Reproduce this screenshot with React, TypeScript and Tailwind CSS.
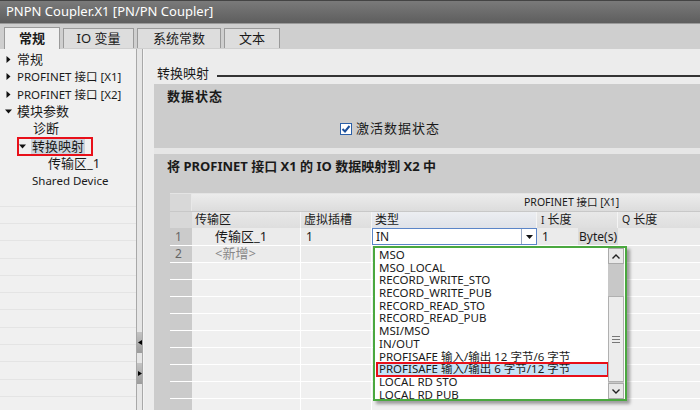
import React from 'react';

const FONT = { fontFamily: '"Noto Sans", "Noto Sans CJK SC", sans-serif' };

const TreeArrow = ({ open }: { open?: boolean }) => (
  <svg width="7" height="7" viewBox="0 0 7 7" className="shrink-0">
    {open ? <path d="M0 1.5 L7 1.5 L3.5 5.5 Z" fill="#111" /> : <path d="M1.5 0 L5.5 3.5 L1.5 7 Z" fill="#111" />}
  </svg>
);

const treeItems: { label: string; indent: number; arrow?: 'open' | 'closed'; selected?: boolean }[] = [
  { label: '常规', indent: 5, arrow: 'closed' },
  { label: 'PROFINET 接口 [X1]', indent: 5, arrow: 'closed' },
  { label: 'PROFINET 接口 [X2]', indent: 5, arrow: 'closed' },
  { label: '模块参数', indent: 5, arrow: 'open' },
  { label: '诊断', indent: 33 },
  { label: '转换映射', indent: 19, arrow: 'open', selected: true },
  { label: '传输区_1', indent: 48 },
  { label: 'Shared Device', indent: 32 },
];

const dropItems = [
  'MSO',
  'MSO_LOCAL',
  'RECORD_WRITE_STO',
  'RECORD_WRITE_PUB',
  'RECORD_READ_STO',
  'RECORD_READ_PUB',
  'MSI/MSO',
  'IN/OUT',
  'PROFISAFE 输入/输出 12 字节/6 字节',
  'PROFISAFE 输入/输出 6 字节/12 字节',
  'LOCAL RD STO',
  'LOCAL RD PUB',
];

// column widths: no, 传输区, 虚拟插槽, 类型, I 长度, Q 长度
const Row = ({ children, className = '' }: { children: React.ReactNode; className?: string }) => (
  <div className={`flex h-[17px] border-b border-white ${className}`}>{children}</div>
);

export default function App() {
  return (
    <div style={FONT} className="w-[700px] h-[410px] overflow-hidden flex flex-col bg-[#ececec] text-[12px] text-[#1a1a1a]">
      {/* title bar */}
      <div className="h-[23px] shrink-0 flex items-center pl-[6px] bg-gradient-to-b from-[#7a7a7a] to-[#5e5e5e] border-t border-[#444] text-white text-[13px]">
        PNPN Coupler.X1 [PN/PN Coupler]
      </div>
      {/* tabs */}
      <div className="h-[26px] shrink-0 flex items-end gap-[3px] pl-[4px] bg-[#cfcfcf] border-t border-[#9a9a9a]">
        <div className="h-[22px] w-[56px] flex items-center justify-center bg-[#f0f0f0] border border-b-0 border-[#9a9a9a] font-bold text-[13px]">常规</div>
        <div className="h-[20px] w-[71px] flex items-center justify-center bg-[#dddddd] border border-b-0 border-[#9a9a9a] text-[13px] mb-[1px]">IO 变量</div>
        <div className="h-[20px] w-[84px] flex items-center justify-center bg-[#dddddd] border border-b-0 border-[#9a9a9a] text-[13px] mb-[1px]">系统常数</div>
        <div className="h-[20px] w-[56px] flex items-center justify-center bg-[#dddddd] border border-b-0 border-[#9a9a9a] text-[13px] mb-[1px]">文本</div>
      </div>
      <div className="flex-1 flex min-h-0">
        {/* tree */}
        <div className="w-[136px] shrink-0 bg-[#f0f0f0] flex flex-col pt-[2px]">
          {treeItems.map((t) => (
            <div key={t.label} className="h-[17.3px] shrink-0 flex items-center" style={{ paddingLeft: t.indent }}>
              {t.arrow && (
                <span className="mr-[5px] flex">
                  <TreeArrow open={t.arrow === 'open'} />
                </span>
              )}
              {t.selected ? (
                <span className="relative bg-[#cdd4dc] text-[13px] leading-[15px] px-[1px]">
                  {t.label}
                  <span className="absolute -left-[14px] -top-[2px] w-[76px] h-[19px] border-2 border-[#e8101a]" />
                </span>
              ) : (
                <span className={t.label.startsWith('PROFINET') || t.label === 'Shared Device' ? 'text-[11.5px]' : 'text-[13px]'}>{t.label}</span>
              )}
            </div>
          ))}
          {Array.from({ length: 12 }).map((_, i) => (
            <div key={i} className="h-[17.3px] shrink-0 border-b border-[#e4e4e4]" />
          ))}
        </div>
        {/* splitter */}
        <div className="w-[8px] shrink-0 flex bg-[#e6e6e6]">
          <div className="w-[1px] bg-[#a8a8a8]" />
          <div className="w-[5px] flex flex-col items-center pt-[283px] gap-[10px]">
            <div className="w-[5px] h-[21px] bg-gradient-to-b from-[#c4c4c4] to-[#9c9c9c] flex items-center justify-center">
              <svg width="4" height="5" viewBox="0 0 4 5"><path d="M4 0 L0 2.5 L4 5 Z" fill="#000" /></svg>
            </div>
            <div className="w-[5px] h-[21px] bg-gradient-to-b from-[#c4c4c4] to-[#9c9c9c] flex items-center justify-center">
              <svg width="4" height="5" viewBox="0 0 4 5"><path d="M0 0 L4 2.5 L0 5 Z" fill="#000" /></svg>
            </div>
          </div>
          <div className="w-[1px] bg-[#a8a8a8]" />
          <div className="w-[1px] bg-[#f4f4f4]" />
        </div>
        {/* right */}
        <div className="flex-1 flex flex-col pl-[10px] bg-[#ececec] min-w-0">
          <div className="h-[35px] shrink-0 flex items-center pl-[3px] pt-[14px]">
            <span className="text-[13px] whitespace-nowrap">转换映射</span>
            <div className="flex-1 h-[2px] bg-[#333] ml-[8px] mt-[4px]" />
          </div>
          {/* section 1 */}
          <div className="h-[64px] shrink-0 bg-[#cccccc] flex flex-col pl-[13px]">
            <div className="h-[26px] flex items-center font-bold text-[13px] tracking-[1px]">数据状态</div>
            <div className="flex items-center pl-[173px] pt-[9px] gap-[4px]">
              <div className="w-[12px] h-[12px] bg-white border border-[#2b5fa8] flex items-center justify-center">
                <svg width="10" height="10" viewBox="0 0 10 10"><path d="M1.5 5 L4 7.5 L8.5 2" stroke="#1c4f9a" strokeWidth="2" fill="none" /></svg>
              </div>
              <span className="text-[13px] tracking-[1px]">激活数据状态</span>
            </div>
          </div>
          <div className="h-[6px] shrink-0 bg-[#e6e6e6]" />
          {/* section 2 */}
          <div className="flex-1 bg-[#cccccc] flex flex-col pl-[13px]">
            <div className="h-[24px] flex items-center font-bold text-[13px] pt-[1px]">将 PROFINET 接口 X1 的 IO 数据映射到 X2 中</div>
            <div className="relative mt-[15px] ml-[3px] flex flex-col">
              {/* header 1 */}
              <div className="flex h-[18px] border-t border-[#e4e4e4]">
                <div className="w-[22px] bg-[#d8d8d8] border-r border-[#e8e8e8]" />
                <div className="flex-1 bg-gradient-to-b from-[#ececec] to-[#dcdcdc] flex items-center pl-[332px] text-[10.5px]">
                  PROFINET 接口 [X1]
                </div>
              </div>
              {/* header 2 */}
              <div className="flex h-[17px] text-[12px] border-t border-[#c8c8c8]">
                <div className="w-[22px] bg-[#d8d8d8]" />
                <div className="w-[109px] pl-[3px] flex items-center bg-gradient-to-b from-[#e8e8e8] to-[#dedede] border-r border-[#f4f4f4]">传输区</div>
                <div className="w-[71px] pl-[3px] flex items-center bg-gradient-to-b from-[#e8e8e8] to-[#dedede] border-r border-[#f4f4f4]">虚拟插槽</div>
                <div className="w-[165px] pl-[3px] flex items-center bg-gradient-to-b from-[#eceef2] to-[#dfe2e8] border-r border-[#f4f4f4]">类型</div>
                <div className="w-[81px] pl-[4px] flex items-center bg-gradient-to-b from-[#e8e8e8] to-[#dedede] border-r border-[#f4f4f4]"><span className="text-[10px] mr-[3px]">I</span>长度</div>
                <div className="flex-1 pl-[4px] flex items-center bg-gradient-to-b from-[#e8e8e8] to-[#dedede]"><span className="text-[10.5px] mr-[3px]">Q</span>长度</div>
              </div>
              {/* row 1 */}
              <Row className="h-[18px] bg-[#ebebeb]">
                <div className="w-[22px] bg-[#cbcbcb] pl-[5px] flex items-center text-[#666]">1</div>
                <div className="w-[109px] pl-[23px] flex items-center text-[13px] border-r border-white">传输区_1</div>
                <div className="w-[71px] pl-[5px] flex items-center border-r border-white">1</div>
                <div className="w-[165px] flex items-center bg-white border border-[#5b85c8]">
                  <span className="flex-1 pl-[3px]">IN</span>
                  <div className="w-[15px] h-full border-l border-[#9aa9c2] flex items-center justify-center">
                    <svg width="7" height="4" viewBox="0 0 7 4"><path d="M0 0 L7 0 L3.5 4 Z" fill="#111" /></svg>
                  </div>
                </div>
                <div className="w-[81px] flex items-center justify-between pl-[5px]">
                  <span>1</span>
                  <span className="h-full w-[40px] flex items-center justify-center bg-[#dcdcdc]">Byte(s)</span>
                </div>
                <div className="flex-1" />
              </Row>
              {/* row 2 */}
              <Row className="bg-[#ebebeb]">
                <div className="w-[22px] bg-[#cbcbcb] pl-[5px] flex items-center text-[#666]">2</div>
                <div className="w-[109px] pl-[23px] flex items-center text-[13px] text-[#888] border-r border-white">&lt;新增&gt;</div>
                <div className="w-[71px] border-r border-white" />
                <div className="flex-1" />
              </Row>
              {Array.from({ length: 9 }).map((_, i) => (
                <Row key={i} className="bg-[#f0f0f0]">
                  <div className="w-[22px] bg-[#cbcbcb]" />
                  <div className="w-[109px] border-r border-white" />
                  <div className="w-[71px] border-r border-white" />
                  <div className="flex-1" />
                </Row>
              ))}
              {/* dropdown */}
              <div className="absolute left-[203px] top-[53px] w-[254px] h-[155px] bg-white border-2 border-[#4aa83f] shadow-[3px_3px_3px_rgba(0,0,0,0.35)] flex">
                <div className="flex-1 flex flex-col pt-[1px] pl-[2px]">
                  {dropItems.map((d, i) => (
                    <div
                      key={d}
                      className={`h-[12.7px] leading-[12.7px] text-[11.5px] whitespace-nowrap pl-[2px] ${i === 9 ? 'bg-[#c7e3f7] outline-2 outline-[#e8101a] -outline-offset-1' : ''}`}
                    >
                      {d}
                    </div>
                  ))}
                </div>
                <div className="w-[16px] flex flex-col bg-[#c8c8c8] mr-[1px]">
                  <div className="h-[16px] bg-[#e8e8e8] border border-[#aaa] flex items-center justify-center">
                    <svg width="8" height="5" viewBox="0 0 8 5"><path d="M0.5 4.5 L4 1 L7.5 4.5" stroke="#222" strokeWidth="1.4" fill="none" /></svg>
                  </div>
                  <div className="h-[32px]" />
                  <div className="h-[86px] bg-[#ececec] border border-[#b0b0b0] flex items-center justify-center">
                    <svg width="8" height="7" viewBox="0 0 8 7"><path d="M0 0.5 H8 M0 3.5 H8 M0 6.5 H8" stroke="#777" /></svg>
                  </div>
                  <div className="flex-1" />
                  <div className="h-[16px] bg-[#e8e8e8] border border-[#aaa] flex items-center justify-center">
                    <svg width="8" height="5" viewBox="0 0 8 5"><path d="M0.5 0.5 L4 4 L7.5 0.5" stroke="#222" strokeWidth="1.4" fill="none" /></svg>
                  </div>
                </div>
              </div>
            </div>
          </div>
        </div>
      </div>
    </div>
  );
}
